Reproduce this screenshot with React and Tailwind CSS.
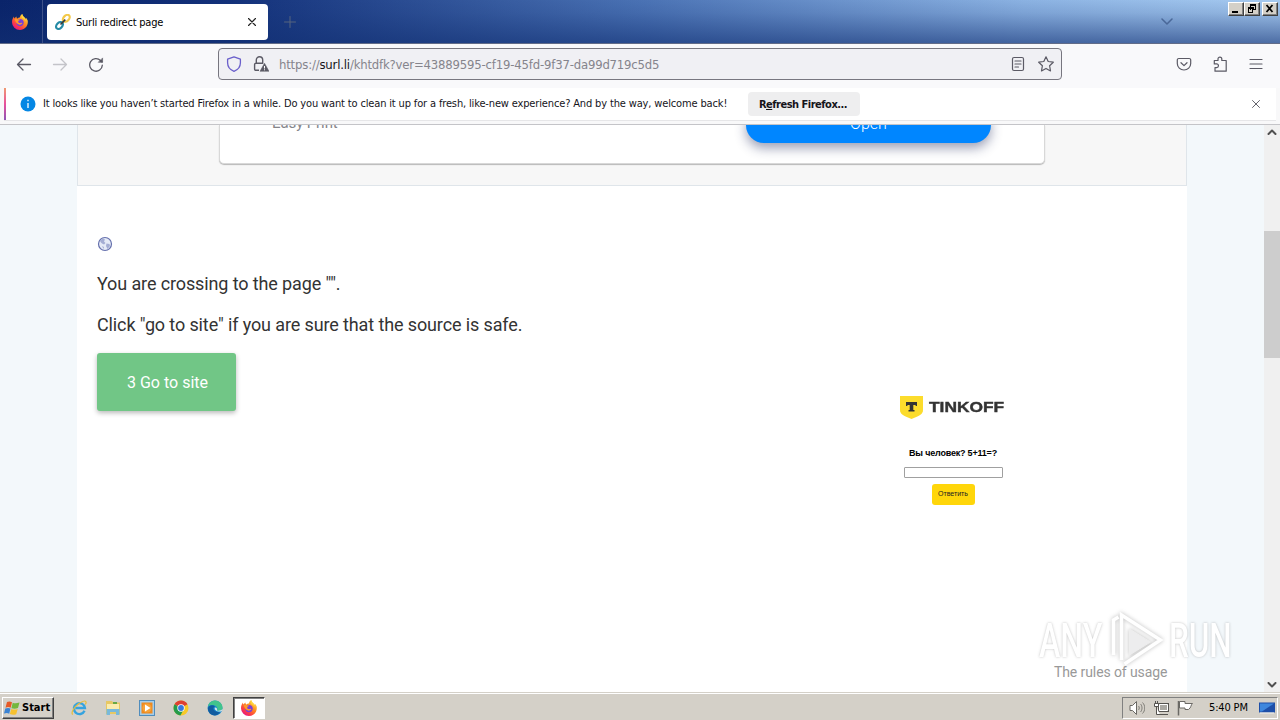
import React from "react";

const UI = "font-['DejaVu_Sans_Condensed','DejaVu_Sans',sans-serif] [font-stretch:condensed]";

function Firefox({ className }) {
  return (
    <svg className={className} viewBox="0 0 16 16">
      <defs>
        <linearGradient id="fxBody" x1="0.85" y1="0.1" x2="0.2" y2="0.95">
          <stop offset="0" stopColor="#ffe04a" />
          <stop offset="0.4" stopColor="#ff8a1f" />
          <stop offset="0.75" stopColor="#fb3b47" />
          <stop offset="1" stopColor="#e4148a" />
        </linearGradient>
      </defs>
      <path fill="url(#fxBody)" d="M15.7 6.6c-.4-1.3-1.200-2.300-2-2.800.3.8.4 1.300.4 1.600C13.100 3 10.400 2.400 10.300 0 8.500 1 8 2.500 7.900 3.500 6.800 3.500 6 4 5.400 4.600 4.600 4.200 4.500 3.200 4.500 2.500 3.500 3 3 4 2.700 4.500 2 4.300 2 3 2 2.600.8 4 0 6 0 8.300A7.900 7.700 0 0 0 8 16c5 0 8.600-4.500 7.700-9.400z" />
      <circle cx="8" cy="8.600" r="3.700" fill="#7a3fd8" />
      <path fill="#ff9a26" d="M2.500 5.500c2-1.200 3.200 0 5.500.1 0 1-1.700 1.200-1.800 1.700-.2 1 .9 2.300 2.600 1.600 1-.4 1.700-.1 1.500.4-.8 1.700-3.700 1.900-5.200.3C3.900 8.400 3.400 7 2.500 5.500z" />
      <path fill="#ffd83a" d="M10.300 0c.1 2.600 3.300 3.500 3.500 7.200-.7-1.500-1.900-2.800-3.600-3.300C9.400 3 9.500 1.200 10.300 0z" />
    </svg>
  );
}

function Stroke({ children, className, box = "0 0 16 16", w = 1.2 }) {
  return (
    <svg className={className} viewBox={box} fill="none" stroke="currentColor" strokeWidth={w} strokeLinecap="round" strokeLinejoin="round">
      {children}
    </svg>
  );
}

function WinButton({ children }) {
  return (
    <div className="h-[14px] w-4 border border-t-white border-l-white border-r-[#404040] border-b-[#404040] bg-[#d4d0c8] shadow-[inset_-1px_-1px_0_#808080]">
      <svg className="block h-3 w-[14px]" viewBox="0 0 14 12" shapeRendering="crispEdges" fill="none" stroke="#000">{children}</svg>
    </div>
  );
}

function TitleBar() {
  return (
    <div className="flex h-[44px] shrink-0 border-b border-[#626c88] bg-[linear-gradient(to_bottom,rgba(18,48,115,0)_0%,rgba(18,48,115,0.12)_30%,rgba(18,48,115,0.6)_100%),linear-gradient(to_right,#0a246a_0%,#13317a_18%,#4a72b4_50%,#8bb2e2_80%,#a6caf0_100%)]">
      <div className="flex w-[43px] items-center border-r border-[#3d5189] pl-3">
        <Firefox className="h-4 w-4" />
      </div>
      <div className="mt-1 ml-1 flex h-9 w-[221px] items-center rounded bg-white pl-2">
        <svg className="h-4 w-4" viewBox="0 0 16 16" fill="none" strokeWidth="2.200">
          <ellipse cx="11.300" cy="4.300" rx="4" ry="2.700" transform="rotate(-45 11.300 4.300)" stroke="#f3c94a" />
          <ellipse cx="4.500" cy="11.500" rx="4" ry="2.700" transform="rotate(-45 4.500 11.500)" stroke="#258aa5" />
          <path d="M5.500 10.500 10.300 5.700" stroke="#393939" strokeWidth="1.700" />
        </svg>
        <span className={`${UI} ml-[5px] w-[172px] pt-[2px] text-[11px] tracking-[-0.22px] whitespace-nowrap text-black`}>Surli redirect page</span>
        <Stroke className="h-2 w-2 text-[#222]" box="0 0 8 8" w={1.200}><path d="M.5.5l7 7M7.500.5l-7 7" /></Stroke>
      </div>
      <div className="ml-4 flex items-center text-[#56657f]">
        <Stroke className="h-3 w-3" box="0 0 12 12" w={1}><path d="M6 .5v11M.5 6h11" /></Stroke>
      </div>
      <div className="mr-[55px] ml-auto flex items-center text-[#4a6898]">
        <Stroke className="h-[7px] w-3" box="0 0 12 7" w={1.500}><path d="M1 1l5 5 5-5" /></Stroke>
      </div>
      <div className="flex pt-[2px] pr-[2px]">
        <WinButton><path d="M3 9h6" strokeWidth="2" /></WinButton>
        <WinButton>
          <path d="M5.500 2v5M5 2h6M10.500 2v5M8 6.500h3M3.500 5v5M3 5h5M7.500 5v5M3 9.500h5" />
          <path d="M5 2h6M3 5h6" strokeWidth="1.500" />
        </WinButton>
        <div className="w-[2px]" />
        <WinButton><path d="M3.500 2l6 7M9.500 2l-6 7" strokeWidth="1.800" shapeRendering="auto" /></WinButton>
      </div>
    </div>
  );
}

function NavBar() {
  return (
    <div className="flex h-11 shrink-0 items-center bg-[#f9f9fb] pb-[4px] text-[#5b5a65]">
      <Stroke className="ml-4 h-4 w-4" w={1.300}><path d="M1.500 8.500h13M7 3 1.500 8.500 7 14" /></Stroke>
      <Stroke className="ml-5 h-4 w-4 text-[#c4c4c9]" w={1.300}><path d="M1.500 8.500h13M9 3l5.500 5.500L9 14" /></Stroke>
      <Stroke className="ml-5 h-4 w-4" w={1.300}><path d="M14.300 9.200A6.300 6.300 0 1 1 12.500 4.500L14 6" /><path d="M14.600 2.300v4h-4z" fill="currentColor" strokeWidth=".6" /></Stroke>
      <div className="ml-[114px] flex h-8 w-[844px] items-center rounded border border-[#77767f] bg-[#f0f0f4] pl-[7px]">
        <Stroke className="h-4 w-4 text-[#6a5fcb]" w={1.300}><path d="M8 .9l6.400 2.300v3.600c0 3.600-2.400 7-6.400 8.500C4 13.800 1.600 10.400 1.600 6.800V3.200z" /></Stroke>
        <svg className="ml-[11px] h-4 w-4" viewBox="0 0 16 16" fill="none" stroke="currentColor" strokeWidth="1.400">
          <path d="M6 14.300H2.800A1.200 1.200 0 0 1 1.600 13V8.500a1.200 1.200 0 0 1 1.200-1.200h7.500M3.300 7V4a3.200 3.200 0 0 1 6.400 0v3" />
          <path d="M11.500 7.200 7 15.300h9z" fill="currentColor" strokeWidth=".5" strokeLinejoin="round" />
          <path d="M11.500 10v2.500M11.500 13.300v1" stroke="#fff" strokeWidth="1" />
        </svg>
        <span className={`${UI} ml-[10px] w-[731px] pt-[2px] text-[13px] tracking-[-0.19px] whitespace-nowrap text-[#85848c]`}>
          https://<span className="text-[#15141a]">surl.li</span>/khtdfk?ver=43889595-cf19-45fd-9f37-da99d719c5d5
        </span>
        <Stroke className="h-4 w-4 shrink-0"><rect x="2.500" y="1.500" width="11" height="13" rx="1.500" /><path d="M5 5h6M5 8h6M5 11h3.500" /></Stroke>
        <Stroke className="ml-3 h-4 w-4 shrink-0"><path d="M8 .8l2.200 4.700 5.100.7-3.700 3.500.9 5.200L8 12.400l-4.500 2.500.9-5.200L.7 6.200l5.100-.7z" /></Stroke>
      </div>
      <Stroke className="ml-[114px] h-4 w-4"><path d="M2.800 2.500h10.400a1.500 1.500 0 0 1 1.500 1.500v3.500A6.700 6.500 0 0 1 1.300 7.500V4A1.500 1.500 0 0 1 2.800 2.500zM5 6.700l3 2.900 3-2.900" /></Stroke>
      <Stroke className="ml-5 h-4 w-4"><path d="M2.300 6V4.500H6V3a1.900 1.900 0 0 1 3.800 0v1.500h4.400v10.700H3v-3.600h1.600a1.850 1.850 0 0 0 0-3.700H2.300z" /></Stroke>
      <Stroke className="ml-5 h-4 w-4" w={1.200}><path d="M2 3.500h12M2 8h12M2 12.500h12" /></Stroke>
    </div>
  );
}

function Notice() {
  return (
    <div className="h-[37px] shrink-0 border-b border-[#c4c4c8] bg-[#f8f8f9] pl-1">
      <div className="flex h-[33px] w-[1272px] border-b border-[#e6e6e8] bg-white">
        <div className="h-8 w-[2px] bg-[linear-gradient(to_bottom,#f09a72,#e8509c_50%,#8d55b5)]" />
        <svg className="mt-2 ml-[14px] h-4 w-4" viewBox="0 0 16 16"><circle cx="8" cy="8" r="7.500" fill="#0587e4" /><path d="M8 7v5M8 3.800v1.500" stroke="#fff" strokeWidth="1.300" /></svg>
        <span className={`${UI} mt-2 ml-[7px] w-[705px] text-[11px] leading-4 tracking-[-0.147px] whitespace-nowrap text-[#15141a]`}>
          It looks like you haven’t started Firefox in a while. Do you want to clean it up for a fresh, like-new experience? And by the way, welcome back!
        </span>
        <button className={`${UI} mt-1 h-6 w-28 rounded bg-[#eeeeef] pt-[2px] pr-[2px] text-[11px] font-bold tracking-[-0.5px] whitespace-nowrap text-[#15141a]`}>
          R<span className="underline">e</span>fresh Firefox...
        </button>
        <Stroke className="mt-3 mr-4 ml-auto h-2 w-2 text-[#65646c]" box="0 0 8 8" w={1}><path d="M.5.5l7 7M7.500.5l-7 7" /></Stroke>
      </div>
    </div>
  );
}

function AnyRun() {
  return (
    <div className="absolute top-[485px] left-[1039px] flex h-[62px] items-center font-['Roboto',sans-serif] text-[48px] leading-none font-medium text-white [text-shadow:0_0_3px_rgba(90,90,90,0.4)]">
      <span className="w-[67px]"><span className="inline-block origin-left scale-x-[0.670]">ANY</span></span>
      <svg className="h-[60px] w-[63px] shrink-0 drop-shadow-[0_0_2px_rgba(90,90,90,0.4)]" viewBox="0 0 62 60" fill="none" stroke="#fff" strokeWidth="3.500">
        <path d="M7 44V9l5-3" />
        <path d="M15 49V4l39 25-36 24" />
        <path d="M23 41V18l21 13-21 13z" fill="#ededee" stroke="#eee" strokeWidth="1" />
      </svg>
      <span className="w-[64px]"><span className="inline-block origin-left scale-x-[0.655]">RUN</span></span>
    </div>
  );
}

function Tinkoff() {
  return (
    <div className="absolute top-[270px] left-[823px] flex w-[106px] flex-col items-center font-['Liberation_Sans',sans-serif]">
      <div className="flex h-6 w-full items-start">
        <svg className="h-6 w-6 shrink-0" viewBox="0 0 24 24">
          <path fill="#fcdc2c" d="M0 1h23v14c0 4-3 5.500-11.500 9C3 20.500 0 19 0 15z" />
          <path fill="#333" d="M6 7h11v4h-1.400V9.900h-2.300v5h1.200v1.700h-6v-1.700h1.200v-5H7.400V11H6z" />
        </svg>
        <span className="ml-[5px] inline-block w-[76px] origin-left scale-x-[1.240] pt-[5px] text-[14px] leading-[15px] font-bold text-[#333] [-webkit-text-stroke:0.4px_#333]">TINKOFF</span>
      </div>
      <div className="mt-[28px] text-[9px] leading-[12px] font-bold tracking-[-0.2px] whitespace-nowrap text-black">Вы человек? 5+11=?</div>
      <div className="mt-2 h-[11px] w-[99px] rounded-[1px] border border-[#a0a0a0] bg-white" />
      <div className="mt-[6px] flex h-[21px] w-[43px] items-center justify-center rounded-[3px] bg-[#ffd60a] text-[7px] text-[#222]">Ответить</div>
    </div>
  );
}

function Page() {
  return (
    <div className="flex h-[567px] shrink-0 overflow-hidden bg-[#f3f8fb]">
      <main className="relative ml-[77px] w-[1110px] bg-white font-['Roboto',sans-serif]">
        <section className="flex h-[61px] justify-center overflow-hidden border border-t-0 border-[#dfe5ea] bg-[#f7f7f7] pb-[21px]">
          <div className="flex w-[826px] rounded-b-[5px] border border-t-0 border-[#d8d8d8] bg-white shadow-[0_1px_1px_#b7b7b7]">
            <span className="-mt-[11px] ml-[52px] w-[474px] text-[15px] leading-[18px] tracking-[-0.1px] text-[#85858a]">Easy Print</span>
            <div className="-mt-[18px] flex h-9 w-[245px] justify-center rounded-full bg-[#0086ff] pt-[8px] text-[16px] leading-[18px] font-light text-white shadow-[0_5px_12px_rgba(30,40,90,0.45)]">Open</div>
          </div>
        </section>
        <div className="px-5 pt-[50px] text-[#333]">
          <svg className="h-4 w-4" viewBox="0 0 16 16">
            <circle cx="8" cy="8" r="6.500" fill="#e5eaf6" stroke="#6570ad" strokeWidth="1.200" />
            <path fill="#a4add3" d="M3 4.500 6 2.500l2 1-1 2 1.500 1.500L7 8.500 5 7.500 3.500 6zM9.500 7.500l3 .5.5 2-2.500 3L9 10zM5 10l2 1-.5 2z" />
          </svg>
          <p className="mt-[18px] text-[18px] leading-[27px] tracking-[-0.12px]">You are crossing to the page "".</p>
          <p className="mt-[14px] text-[18px] leading-[27px] tracking-[-0.12px]">Click "go to site" if you are sure that the source is safe.</p>
          <button className="mt-[15px] h-[58px] w-[139px] rounded-[3px] bg-[#71c686] pt-[2px] pl-[2px] text-[16px] text-white shadow-[0_2px_5px_rgba(0,0,0,0.28)]">3 Go to site</button>
        </div>
        <Tinkoff />
        <div className="absolute top-[538px] left-[977px] text-[14px] leading-[18px] tracking-[-0.1px] whitespace-nowrap text-[#999]">The rules of usage</div>
      </main>
      <div className="ml-auto flex w-4 flex-col items-center bg-[#f0f0f0] text-[#505050]">
        <Stroke className="mt-[4px] h-[6px] w-[10px]" box="0 0 10 6" w={2}><path d="M1.500 5 5 1.500 8.500 5" /></Stroke>
        <div className="mt-24 h-[127px] w-4 bg-[#cdcdcd]" />
        <Stroke className="mt-auto mb-[4px] h-[6px] w-[10px]" box="0 0 10 6" w={2}><path d="M1.500 1 5 4.500 8.500 1" /></Stroke>
      </div>
    </div>
  );
}

function Taskbar() {
  return (
    <div className={`${UI} flex h-7 shrink-0 items-center border-t border-[#d4d0c8] bg-[#d4d0c8] pt-[2px] shadow-[inset_0_1px_0_#fff]`}>
      <div className="ml-[2px] flex h-[22px] w-[52px] items-center border border-t-white border-l-white border-r-[#404040] border-b-[#404040] pl-[1px] shadow-[inset_-1px_-1px_0_#808080]">
        <svg className="h-4 w-4 shrink-0" viewBox="0 0 16 16">
          <path fill="#e65a27" d="M3 2c2-1 3.500-.5 5 .2L6.700 7.700c-1.800-.8-3.200-.8-5.200 0z" />
          <path fill="#74b73d" d="M8.700 2.700c2 .8 3.800.7 6.800-.3L14 8c-2.300.9-4.300.9-6.600.2z" />
          <path fill="#3b83d3" d="M1.300 8.500c2-.8 3.700-.7 5.200 0L5.200 13.700c-1.500-.8-3.200-.8-5.200-.1z" />
          <path fill="#f6c12f" d="M7.300 9c2.200.8 4.200.8 6.400 0l-1.500 5.200c-2.200.8-4.200.7-6.300-.2z" />
        </svg>
        <span className="pt-[1px] pl-[2px] text-[11px] font-bold text-black">Start</span>
      </div>
      <svg className="ml-[17px] h-4 w-4" viewBox="0 0 16 16" fill="none">
        <path d="M13.500 10.800A5.500 5.500 0 1 1 13.900 8H4.500" stroke="#35a3df" strokeWidth="2.400" />
        <path d="M1.800 14.500C-.5 13 3 7 8 3.500c3-2 6-3 6.800-2 .5.700.2 2-.6 3" stroke="#e7bd3b" strokeWidth="1.200" />
      </svg>
      <svg className="ml-[18px] h-4 w-4" viewBox="0 0 16 16">
        <path fill="#e7c864" d="M1 1h6l1 1.500h7V14H1z" /><path fill="#fbecae" d="M2 4h12v6H2z" />
        <path fill="#79b9da" d="M1.500 9h13v6H11v-3H5v3H1.500z" /><path fill="#68a844" d="M8 2h4v2H8z" />
      </svg>
      <svg className="ml-[18px] h-4 w-4" viewBox="0 0 16 16">
        <rect x=".5" y=".5" width="15" height="15" fill="#a5cdea" stroke="#508dbd" /><rect x="2.500" y="2.500" width="11" height="11" fill="#ef8a1f" />
        <circle cx="8" cy="8" r="4.600" fill="#f6a239" /><path fill="#fff" d="M6 4.500 11.500 8 6 11.500z" />
      </svg>
      <svg className="ml-[18px] h-4 w-4" viewBox="0 0 16 16">
        <circle cx="8" cy="8" r="7.500" fill="#f7c928" /><path fill="#de4033" d="M8 8 1.500 4.300A7.500 7.500 0 0 1 14.500 4.300z" />
        <path fill="#249b4c" d="M8 8 1.500 4.300A7.500 7.500 0 0 0 7.400 15.500L10.500 10z" /><circle cx="8" cy="8" r="3.700" fill="#fff" /><circle cx="8" cy="8" r="2.900" fill="#3778df" />
      </svg>
      <svg className="ml-[18px] h-4 w-4" viewBox="0 0 16 16">
        <circle cx="8" cy="8" r="7.500" fill="#1789cf" /><path fill="#42c48c" d="M3 2.500a7.500 7.500 0 0 1 12.500 6C15 11 11.500 11 10 10.500c1.500-3-1-5-4-5.500C4 4.800 2 5.500 1 6.500 1.300 5 2 3.500 3 2.500z" />
        <path fill="#125c9f" d="M1 8c1-3 5-3.500 7-1.500-3 1-2 5.500 5 5.800C11.500 15 8 16 5.500 15 2.500 14 .7 11 1 8z" /><path fill="#d4e6ec" d="M8 7.500c-1 1.500.5 4.200 6 4.100 1-.5 1.400-1.600 1.400-2.500-1 1.500-4 2-5.400 1.300C10.500 9.500 10 7.500 8 7.500z" />
      </svg>
      <div className="ml-[10px] flex h-[22px] w-8 items-center justify-center border border-t-[#404040] border-l-[#404040] border-r-white border-b-white bg-white shadow-[inset_1px_1px_0_#808080]">
        <Firefox className="h-4 w-4" />
      </div>
      <div className="mr-[2px] ml-auto flex h-[22px] w-[156px] items-center border border-t-[#808080] border-l-[#808080] border-r-white border-b-white pl-[6px]">
        <svg className="h-4 w-4" viewBox="0 0 16 16" fill="none" stroke="#6b6965">
          <path fill="#fff" d="M1 5.500h2.500l4-4v13l-4-4H1z" /><path d="M9.500 6c1 1 1 3 0 4M11.500 4c2 2 2 6 0 8M13.500 2.500c3 3 3 8 0 11" strokeWidth=".8" />
        </svg>
        <svg className="ml-[8px] h-4 w-4" viewBox="0 0 16 16" fill="none" stroke="#55534f">
          <rect x="5.500" y="3.500" width="10" height="8" fill="#aaa8a2" /><path stroke="#fff" d="M6.500 4.500h8v6h-8z" /><path d="M7 14.500h8" /><path fill="#fff" d="M1.500 3.500h4v3h-4zM2.500 1v2M4.500 1v2M3.500 7v7.500H7" />
        </svg>
        <svg className="ml-[8px] h-4 w-4" viewBox="0 0 16 16" stroke="#6b6965">
          <path fill="#fff" d="M2.500 1.500h5.500v2h7.500c-2 1.500-1 4-4 6H8V8H2.500z" /><path d="M1.500 1v14.500" strokeWidth="1.500" />
        </svg>
        <span className="ml-4 w-[50px] pt-[1px] text-[11px] tracking-[-0.15px] whitespace-nowrap text-black">5:40 PM</span>
        <svg className="h-[14px] w-4" viewBox="0 0 16 14"><path fill="#1e4fa8" d="M0 1.500h16v10H0z" /><path fill="#3e87dd" d="M1 2.500h14L3 10.500H1z" /><path fill="#f1f1f1" d="M1 11.500h14v1H1z" /></svg>
      </div>
    </div>
  );
}

export default function App() {
  return (
    <div className="relative flex h-[720px] w-[1280px] flex-col overflow-hidden bg-white">
      <TitleBar />
      <NavBar />
      <Notice />
      <div className="relative h-[567px] shrink-0">
        <Page />
        <AnyRun />
      </div>
      <Taskbar />
    </div>
  );
}
